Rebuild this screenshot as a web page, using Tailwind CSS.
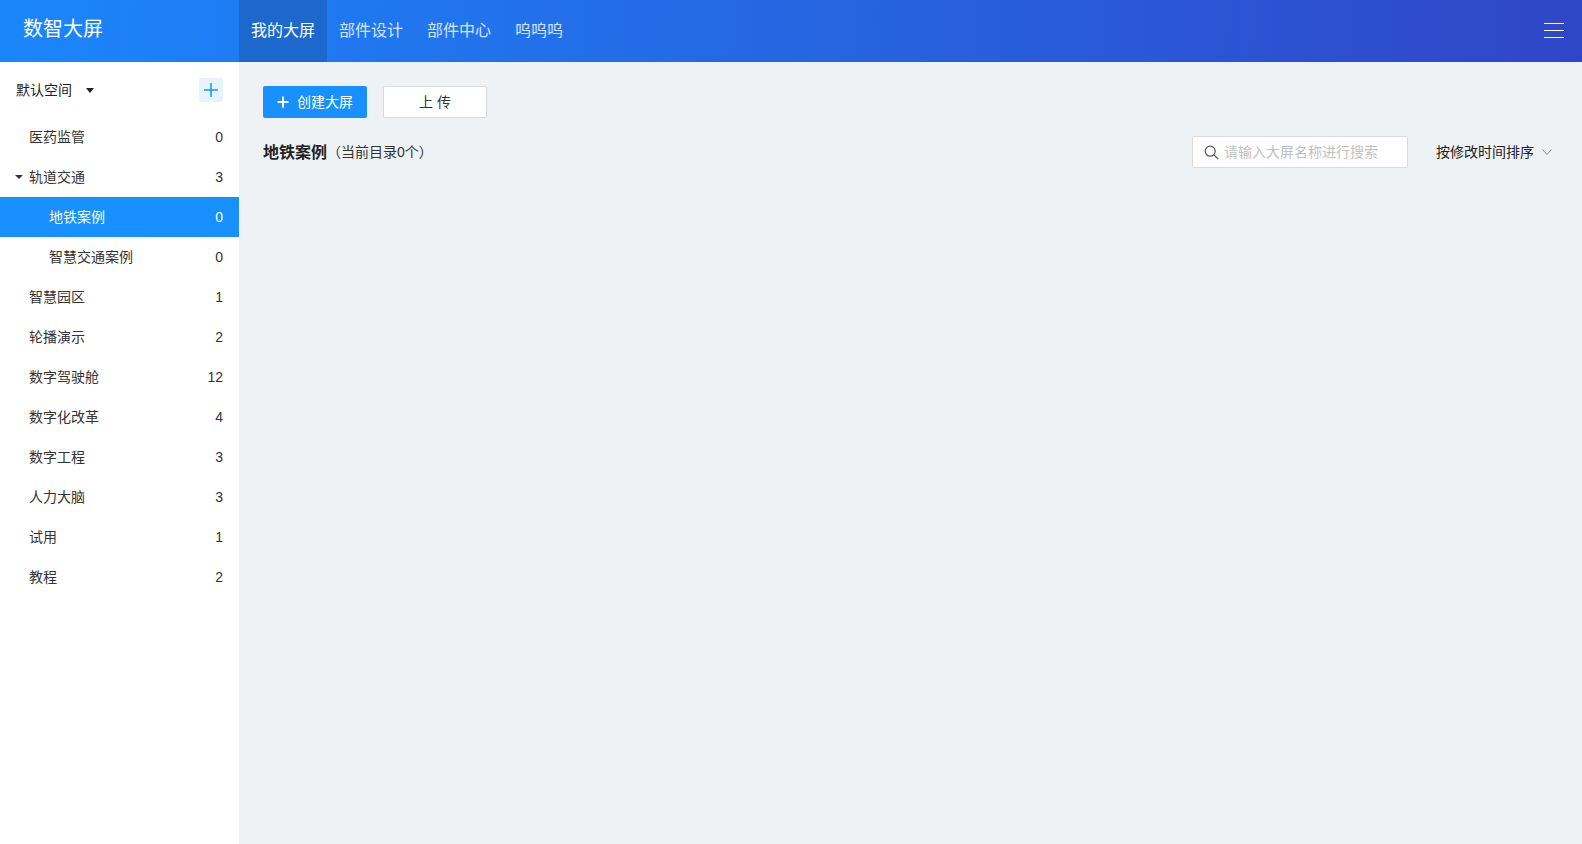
<!DOCTYPE html>
<html lang="zh-CN">
<head>
  <meta charset="UTF-8" />
  <title>数智大屏</title>
  <script src="https://cdn.jsdelivr.net/npm/@tailwindcss/browser@4"></script>
</head>
<body class="h-screen overflow-hidden flex flex-col bg-[#eef2f5] text-[14px] text-[#333] font-['Liberation_Sans','Noto_Sans_CJK_SC',sans-serif]">

  <!-- Header -->
  <header class="h-[62px] shrink-0 flex items-stretch text-white bg-[linear-gradient(92deg,#1b86fb,#3046c8)]">
    <div class="w-[239px] pl-[23px] flex items-center text-[20px] leading-none pb-[4px]">数智大屏</div>
    <nav class="flex text-[16px]">
      <a class="px-3 flex items-center bg-[#1c68cd]">我的大屏</a>
      <a class="px-3 flex items-center text-white/80">部件设计</a>
      <a class="px-3 flex items-center text-white/80">部件中心</a>
      <a class="px-3 flex items-center text-white/80">呜呜呜</a>
    </nav>
    <div class="ml-auto mr-[18px] mt-[23px] self-start flex flex-col gap-[6px] w-5">
      <span class="h-px bg-white"></span>
      <span class="h-px bg-white"></span>
      <span class="h-px bg-white"></span>
    </div>
  </header>

  <div class="flex-1 flex min-h-0">
    <!-- Sidebar -->
    <aside class="w-[239px] shrink-0 bg-white">
      <div class="h-[55px] pl-4 pr-4 flex items-start pt-4 text-[#222]">
        <span class="leading-6">默认空间</span>
        <span class="ml-[14px] mt-[10px] w-0 h-0 border-x-[4px] border-x-transparent border-t-[5px] border-t-[#222]"></span>
        <button class="ml-auto w-6 h-6 rounded-[2px] bg-[#e6f4ff] flex items-center justify-center">
          <svg width="16" height="16" viewBox="0 0 16 16" fill="none" stroke="#1890ff" stroke-width="1.5"><path d="M8 1v14M1 8h14"/></svg>
        </button>
      </div>
      <ul>
        <li class="h-10 pl-[29px] pr-4 flex items-center justify-between"><span>医药监管</span><span>0</span></li>
        <li class="relative h-10 pl-[29px] pr-4 flex items-center justify-between">
          <span class="absolute left-[15px] top-[18px] w-0 h-0 border-x-[4px] border-x-transparent border-t-[4px] border-t-[#333]"></span>
          <span>轨道交通</span><span>3</span>
        </li>
        <li class="h-10 pl-[49px] pr-4 flex items-center justify-between bg-[#1890ff] text-white"><span>地铁案例</span><span>0</span></li>
        <li class="h-10 pl-[49px] pr-4 flex items-center justify-between"><span>智慧交通案例</span><span>0</span></li>
        <li class="h-10 pl-[29px] pr-4 flex items-center justify-between"><span>智慧园区</span><span>1</span></li>
        <li class="h-10 pl-[29px] pr-4 flex items-center justify-between"><span>轮播演示</span><span>2</span></li>
        <li class="h-10 pl-[29px] pr-4 flex items-center justify-between"><span>数字驾驶舱</span><span>12</span></li>
        <li class="h-10 pl-[29px] pr-4 flex items-center justify-between"><span>数字化改革</span><span>4</span></li>
        <li class="h-10 pl-[29px] pr-4 flex items-center justify-between"><span>数字工程</span><span>3</span></li>
        <li class="h-10 pl-[29px] pr-4 flex items-center justify-between"><span>人力大脑</span><span>3</span></li>
        <li class="h-10 pl-[29px] pr-4 flex items-center justify-between"><span>试用</span><span>1</span></li>
        <li class="h-10 pl-[29px] pr-4 flex items-center justify-between"><span>教程</span><span>2</span></li>
      </ul>
    </aside>

    <!-- Main -->
    <main class="flex-1 pt-6 pl-6 pr-[30px]">
      <div class="flex gap-4">
        <button class="w-[104px] h-8 rounded-[2px] bg-[#1890ff] text-white flex items-center justify-center gap-2">
          <svg width="12" height="12" viewBox="0 0 12 12" fill="none" stroke="#fff" stroke-width="2"><path d="M6 .5v11M.5 6h11"/></svg>
          <span>创建大屏</span>
        </button>
        <button class="w-[104px] h-8 rounded-[2px] bg-white border border-[#d9d9d9] text-[#333]">上 传</button>
      </div>
      <div class="mt-[18px] h-8 flex items-center">
        <h2 class="text-[16px] pt-[2px] font-bold text-[#222]">地铁案例</h2>
        <span class="text-[#333]">（当前目录0个）</span>
        <div class="ml-auto w-[216px] h-8 rounded-[2px] bg-white border border-[#d9d9d9] flex items-center pl-[11px] text-[#bfbfbf]">
          <svg width="15" height="15" viewBox="0 0 15 15" fill="none" stroke="#555" stroke-width="1.2"><circle cx="6.2" cy="6.2" r="5"/><path d="M10 10l4.2 4.2"/></svg>
          <span class="ml-[5px]">请输入大屏名称进行搜索</span>
        </div>
        <div class="ml-7 flex items-center text-[#222]">
          <span>按修改时间排序</span>
          <svg class="ml-2" width="10" height="6" viewBox="0 0 10 6" fill="none" stroke="#888" stroke-width="1"><path d="M.5.5L5 5.5 9.5.5"/></svg>
        </div>
      </div>
    </main>
  </div>
</body>
</html>
